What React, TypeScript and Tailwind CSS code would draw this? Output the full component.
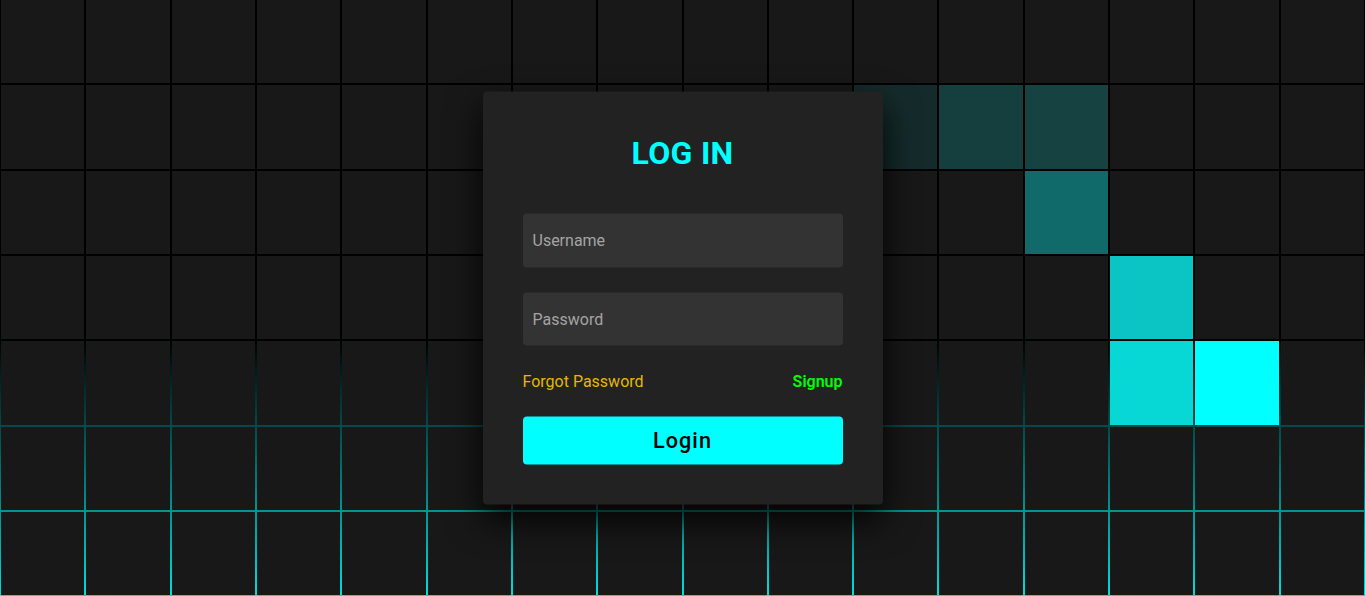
import React from "react";

const COLS = 16;
const ROWS = 8;

const highlights: Record<string, string> = {
  "1-10": "#152b2b",
  "1-11": "#153e3e",
  "1-12": "#164242",
  "2-12": "#106a6a",
  "3-13": "#0bc4c4",
  "4-13": "#07d8d6",
  "4-14": "#00ffff",
};

export default function App() {
  const cells = [];
  for (let r = 0; r < ROWS; r++) {
    for (let c = 0; c < COLS; c++) {
      const key = `${r}-${c}`;
      const color = highlights[key];
      cells.push(
        <span
          key={key}
          className="block w-[calc(6.25vw-2px)] h-[calc(6.25vw-2px)] bg-[#181818]"
          style={color ? { backgroundColor: color } : undefined}
        />
      );
    }
  }

  return (
    <div
      className="relative w-full h-screen overflow-hidden bg-[linear-gradient(to_bottom,#000_0px,#000_338px,#0ff_636px)]"
      style={{ fontFamily: "Roboto, 'Liberation Sans', sans-serif" }}
    >
      <div className="flex flex-wrap justify-center content-start gap-[2px] w-full h-full">
        {cells}
      </div>

      <div className="absolute left-1/2 top-1/2 -translate-x-1/2 -translate-y-1/2 w-[400px] p-[40px] bg-[#222] rounded-[4px] shadow-[0_15px_35px_rgba(0,0,0,0.9)]">
        <div className="flex flex-col items-center gap-[40px] w-full">
          <h2 className="text-[32px] leading-[42px] font-bold text-[#0ff] uppercase tracking-[0.01em]">
            Log in
          </h2>
          <div className="flex flex-col gap-[25px] w-full">
            <input
              type="text"
              placeholder="Username"
              className="w-full h-[53.5px] px-[10px] bg-[#333] rounded-[4px] text-white text-[16px] placeholder:text-[#a4a4a4] outline-none border-none"
            />
            <input
              type="password"
              placeholder="Password"
              className="w-full h-[53.5px] px-[10px] bg-[#333] rounded-[4px] text-white text-[16px] placeholder:text-[#a4a4a4] outline-none border-none"
            />
            <div className="flex justify-between w-full text-[16px] leading-[21px]">
              <a href="#" className="text-[#e6b800]">Forgot Password</a>
              <a href="#" className="text-[#00ff00] font-semibold">Signup</a>
            </div>
            <button className="w-full h-[48px] bg-[#0ff] rounded-[4px] text-black text-[21.6px] font-medium tracking-[0.05em]">
              Login
            </button>
          </div>
        </div>
      </div>
    </div>
  );
}
